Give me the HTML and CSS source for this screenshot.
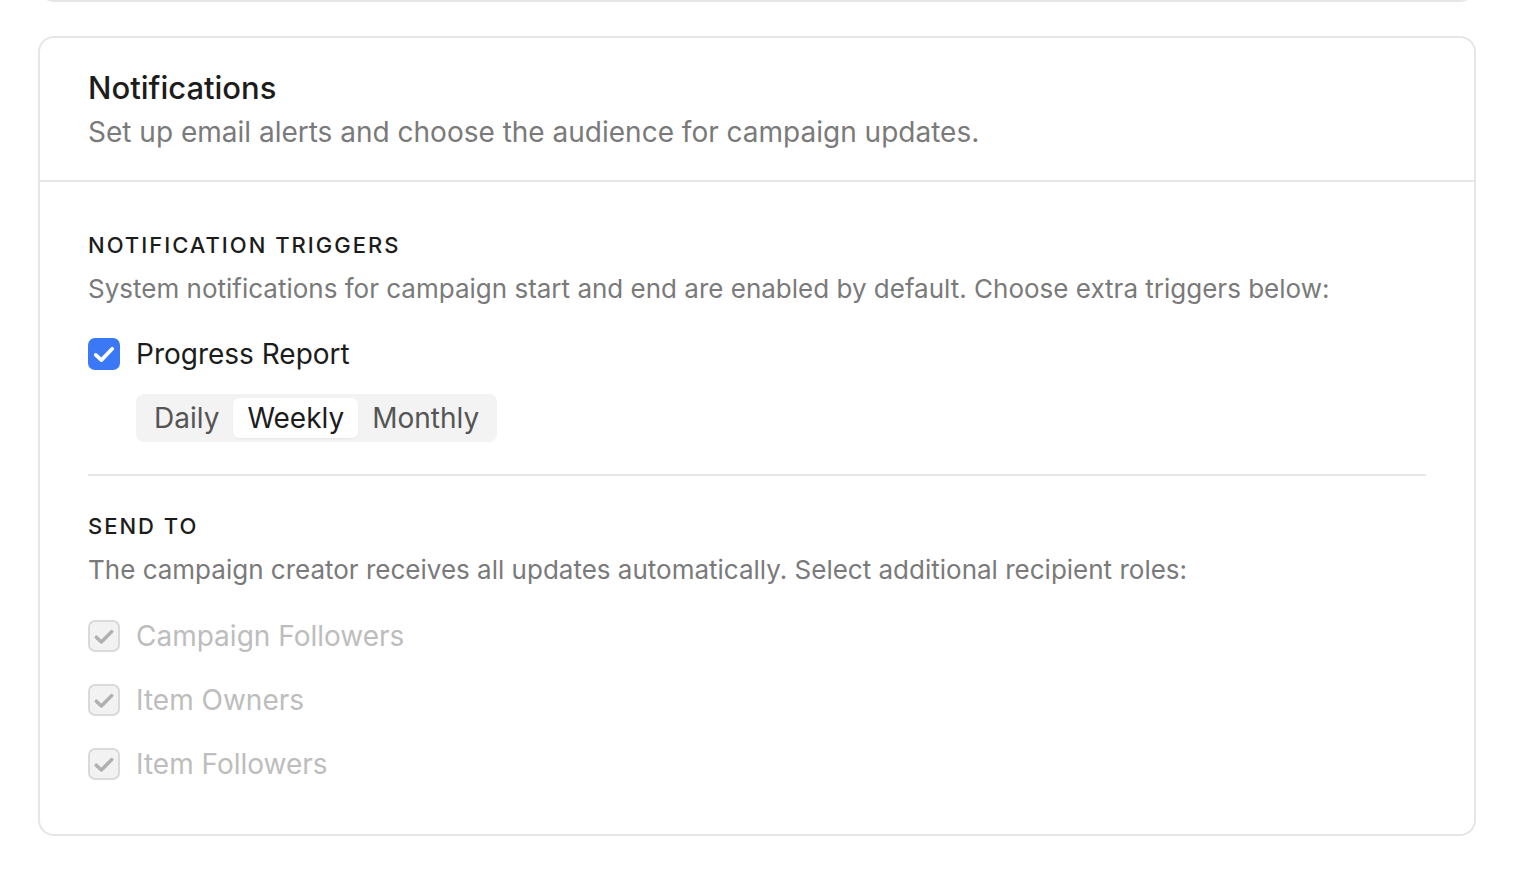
FILE: index.html
```html
<!DOCTYPE html>
<html lang="en">

<head>
    <meta charset="UTF-8">
    <meta name="viewport" content="width=device-width, initial-scale=1.0">
    <title>Notification Settings</title>
    <link rel="stylesheet" href="styles.css">
</head>

<body>
    <div class="page">
        <div class="card card-prev"></div>

        <div class="card">
            <div class="card-header">
                <h2>Notifications</h2>
                <p>Set up email alerts and choose the audience for campaign updates.</p>
            </div>

            <div class="card-body">
                <section class="group">
                    <h3>Notification Triggers</h3>
                    <p class="hint">System notifications for campaign start and end are enabled by default. Choose extra triggers below:</p>

                    <label class="check-row">
                        <span class="checkbox checked">
                            <svg viewBox="0 0 16 16"><path d="M3.3 8.5L6.5 11.5 12.7 5" /></svg>
                        </span>
                        <span>Progress Report</span>
                    </label>

                    <div class="segmented">
                        <button>Daily</button>
                        <button class="active">Weekly</button>
                        <button>Monthly</button>
                    </div>
                </section>

                <hr class="divider">

                <section class="group">
                    <h3>Send To</h3>
                    <p class="hint">The campaign creator receives all updates automatically. Select additional recipient roles:</p>

                    <div class="check-list">
                        <label class="check-row disabled">
                            <span class="checkbox">
                                <svg viewBox="0 0 16 16"><path d="M3.6 8.7L6.5 11.4 12.4 5.5" /></svg>
                            </span>
                            <span>Campaign Followers</span>
                        </label>
                        <label class="check-row disabled">
                            <span class="checkbox">
                                <svg viewBox="0 0 16 16"><path d="M3.6 8.7L6.5 11.4 12.4 5.5" /></svg>
                            </span>
                            <span>Item Owners</span>
                        </label>
                        <label class="check-row disabled">
                            <span class="checkbox">
                                <svg viewBox="0 0 16 16"><path d="M3.6 8.7L6.5 11.4 12.4 5.5" /></svg>
                            </span>
                            <span>Item Followers</span>
                        </label>
                    </div>
                </section>
            </div>
        </div>
    </div>
</body>

</html>
```

FILE: styles.css
```css
body {
    font-family: Inter, 'Noto Sans', sans-serif;
    background-color: #fff;
    color: #1c1c1c;
    margin: 0;
    padding: 0;
}

.page {
    padding: 0 62px 0 38px;
    display: flex;
    flex-direction: column;
    gap: 34px;
}

.card {
    border: 2px solid #e6e6e6;
    border-radius: 16px;
    background-color: #fff;
}

.card-prev {
    height: 40px;
    margin-top: -42px;
}

.card-header {
    padding: 30px 48px 30px;
    border-bottom: 2px solid #e6e6e6;
}

.card-header h2 {
    margin: 0;
    font-size: 31px;
    font-weight: 500;
    line-height: 40px;
}

.card-header p {
    margin: 6px 0 0;
    font-size: 28px;
    line-height: 36px;
    color: #7a7a7a;
}

.card-body {
    padding: 48px 48px 52px;
}

.group h3 {
    margin: 0;
    font-size: 22px;
    font-weight: 500;
    letter-spacing: 2px;
    text-transform: uppercase;
    line-height: 30px;
}

.hint {
    margin: 12px 0 0;
    font-size: 26px;
    line-height: 34px;
    color: #7a7a7a;
}

.check-row {
    display: flex;
    align-items: center;
    gap: 16px;
    font-size: 28px;
    line-height: 36px;
    margin-top: 30px;
}

.checkbox {
    width: 32px;
    height: 32px;
    box-sizing: border-box;
    border-radius: 7px;
    border: 2px solid #dadada;
    background-color: #f2f2f2;
    display: flex;
    align-items: center;
    justify-content: center;
}

.checkbox svg {
    width: 28px;
    height: 28px;
    fill: none;
    stroke: #b0b0b0;
    stroke-width: 2;
    stroke-linecap: round;
    stroke-linejoin: round;
}

.checkbox.checked {
    background-color: #3b78f5;
    border-color: #3b78f5;
}

.checkbox.checked svg {
    stroke: #fff;
    stroke-width: 2.1;
}

.segmented {
    display: inline-flex;
    margin: 22px 0 0 48px;
    padding: 4px;
    background-color: #f3f3f3;
    border-radius: 8px;
}

.segmented button {
    font-family: inherit;
    font-size: 28px;
    line-height: 40px;
    color: #555;
    background: none;
    border: none;
    border-radius: 6px;
    padding: 0 14px;
}

.segmented button.active {
    background-color: #fff;
    color: #1c1c1c;
    box-shadow: 0 1px 2px rgba(0, 0, 0, 0.06);
}

.divider {
    border: none;
    border-top: 2px solid #e6e6e6;
    margin: 32px 0 35px;
}

.check-list .check-row.disabled {
    color: #bdbdbd;
    margin-top: 28px;
}

.check-list .check-row.disabled:first-child {
    margin-top: 31px;
}
```
